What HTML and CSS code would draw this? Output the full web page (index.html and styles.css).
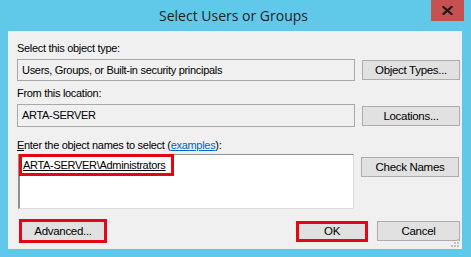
FILE: index.html
```html
<!DOCTYPE html>
<html lang="en">
<head>
  <meta charset="UTF-8" />
  <title>Select Users or Groups</title>
  <link rel="stylesheet" href="styles.css">
</head>
<body>

  <div class="window">
    <div class="titlebar">
      <span class="spacer"></span>
      <div class="title">Select Users or Groups</div>
      <button class="close" title="Close">
        <svg width="11" height="9" viewBox="0 0 11 9">
          <path d="M1.5 1 L9.5 8 M9.5 1 L1.5 8" stroke="#1a1a1a" stroke-width="2.2" stroke-linecap="square" />
        </svg>
      </button>
    </div>

    <div class="client">
      <div class="label first">Select this object type:</div>
      <div class="row">
        <div class="field">Users, Groups, or Built-in security principals</div>
        <button class="btn">Object Types...</button>
      </div>

      <div class="label second">From this location:</div>
      <div class="row">
        <div class="field tall">ARTA-SERVER</div>
        <button class="btn">Locations...</button>
      </div>

      <div class="label third"><u>E</u>nter the object names to select (<a href="#">examples</a>):</div>
      <div class="row top">
        <div class="names">
          <span class="marked">ARTA-SERVER\Administrators</span>
        </div>
        <button class="btn check">Check Names</button>
      </div>

      <div class="footer">
        <button class="btn marked-btn advanced">Advanced...</button>
        <span class="grow"></span>
        <button class="btn marked-btn ok">OK</button>
        <button class="btn cancel">Cancel</button>
      </div>

      <!-- size grip in the corner -->
      <svg class="grip" width="8" height="8" viewBox="0 0 8 8">
        <rect x="6" y="0" width="2" height="2" fill="#c2c2c2" />
        <rect x="3" y="3" width="2" height="2" fill="#c2c2c2" />
        <rect x="6" y="3" width="2" height="2" fill="#c2c2c2" />
        <rect x="0" y="6" width="2" height="2" fill="#c2c2c2" />
        <rect x="3" y="6" width="2" height="2" fill="#c2c2c2" />
        <rect x="6" y="6" width="2" height="2" fill="#c2c2c2" />
      </svg>
    </div>
  </div>

</body>
</html>
```

FILE: styles.css
```css
body {
  margin: 0;
  padding: 0;
  font-family: 'Liberation Sans', Arial, sans-serif;
  font-size: 11px;
  letter-spacing: -0.3px;
  color: #000;
}

.window {
  width: 471px;
  height: 257px;
  background: #60c9e9;
  box-sizing: border-box;
  padding: 0 9px 8px 8px;
  display: flex;
  flex-direction: column;
}

.titlebar {
  height: 31px;
  display: flex;
  align-items: flex-start;
  margin: 0 -9px 0 -8px;
}

.titlebar .spacer {
  width: 36px;
}

.title {
  flex: 1;
  text-align: center;
  font-family: 'Open Sans', 'Noto Sans', sans-serif;
  font-size: 14px;
  letter-spacing: 0;
  line-height: 32px;
  color: #1e1e1e;
}

.close {
  width: 33px;
  height: 21px;
  margin-right: 7px;
  padding: 0;
  border: none;
  background: #c75050;
  display: flex;
  align-items: center;
  justify-content: center;
}

.client {
  position: relative;
  flex: 1;
  background: #f0f0f0;
  padding: 11px 2px 0 9px;
}

.label {
  line-height: 13px;
  white-space: nowrap;
}

.label.second {
  margin-top: 6px;
}

.label.third {
  margin-top: 12px;
}

.label a {
  color: #0066cc;
}

.row {
  display: flex;
  align-items: center;
  gap: 7px;
  margin-top: 4px;
}

.row.top {
  align-items: flex-start;
  margin-top: 2px;
}

.field {
  width: 338px;
  height: 22px;
  box-sizing: border-box;
  border: 1px solid #a8a8a8;
  padding: 0 4px;
  line-height: 20px;
  white-space: nowrap;
}

.field.tall {
  height: 23px;
  line-height: 21px;
}

.btn {
  width: 98px;
  height: 20px;
  box-sizing: border-box;
  padding: 0;
  border: 1px solid #adadad;
  background: #e1e1e1;
  font-family: 'Liberation Sans', Arial, sans-serif;
  font-size: 11.5px;
  letter-spacing: -0.3px;
  color: #000;
}

.names {
  width: 336px;
  height: 55px;
  margin-left: 1px;
  box-sizing: border-box;
  background: #fff;
  border-top: 1px solid #8f8f8f;
  border-left: 2px solid #8f8f8f;
  border-right: 1px solid #dcdcdc;
  border-bottom: 1px solid #dcdcdc;
}

.marked {
  display: inline-block;
  height: 22px;
  box-sizing: border-box;
  margin: -1px 0 0 -1px;
  padding: 0 5px 0 1px;
  border: 3px solid #e30613;
  line-height: 16px;
  font-size: 11px;
  text-decoration: underline;
}

.check {
  margin-top: 3px;
}

.footer {
  display: flex;
  align-items: center;
  gap: 9px;
  margin-top: 10px;
}

.footer .grow {
  flex: 1;
}

.marked-btn {
  border: 3px solid #e30613;
}

.advanced {
  width: 88px;
  height: 24px;
  margin-left: 2px;
}

.ok {
  width: 72px;
  height: 21px;
}

.cancel {
  width: 83px;
  height: 20px;
}

.grip {
  position: absolute;
  right: 3px;
  bottom: 2px;
}
```
